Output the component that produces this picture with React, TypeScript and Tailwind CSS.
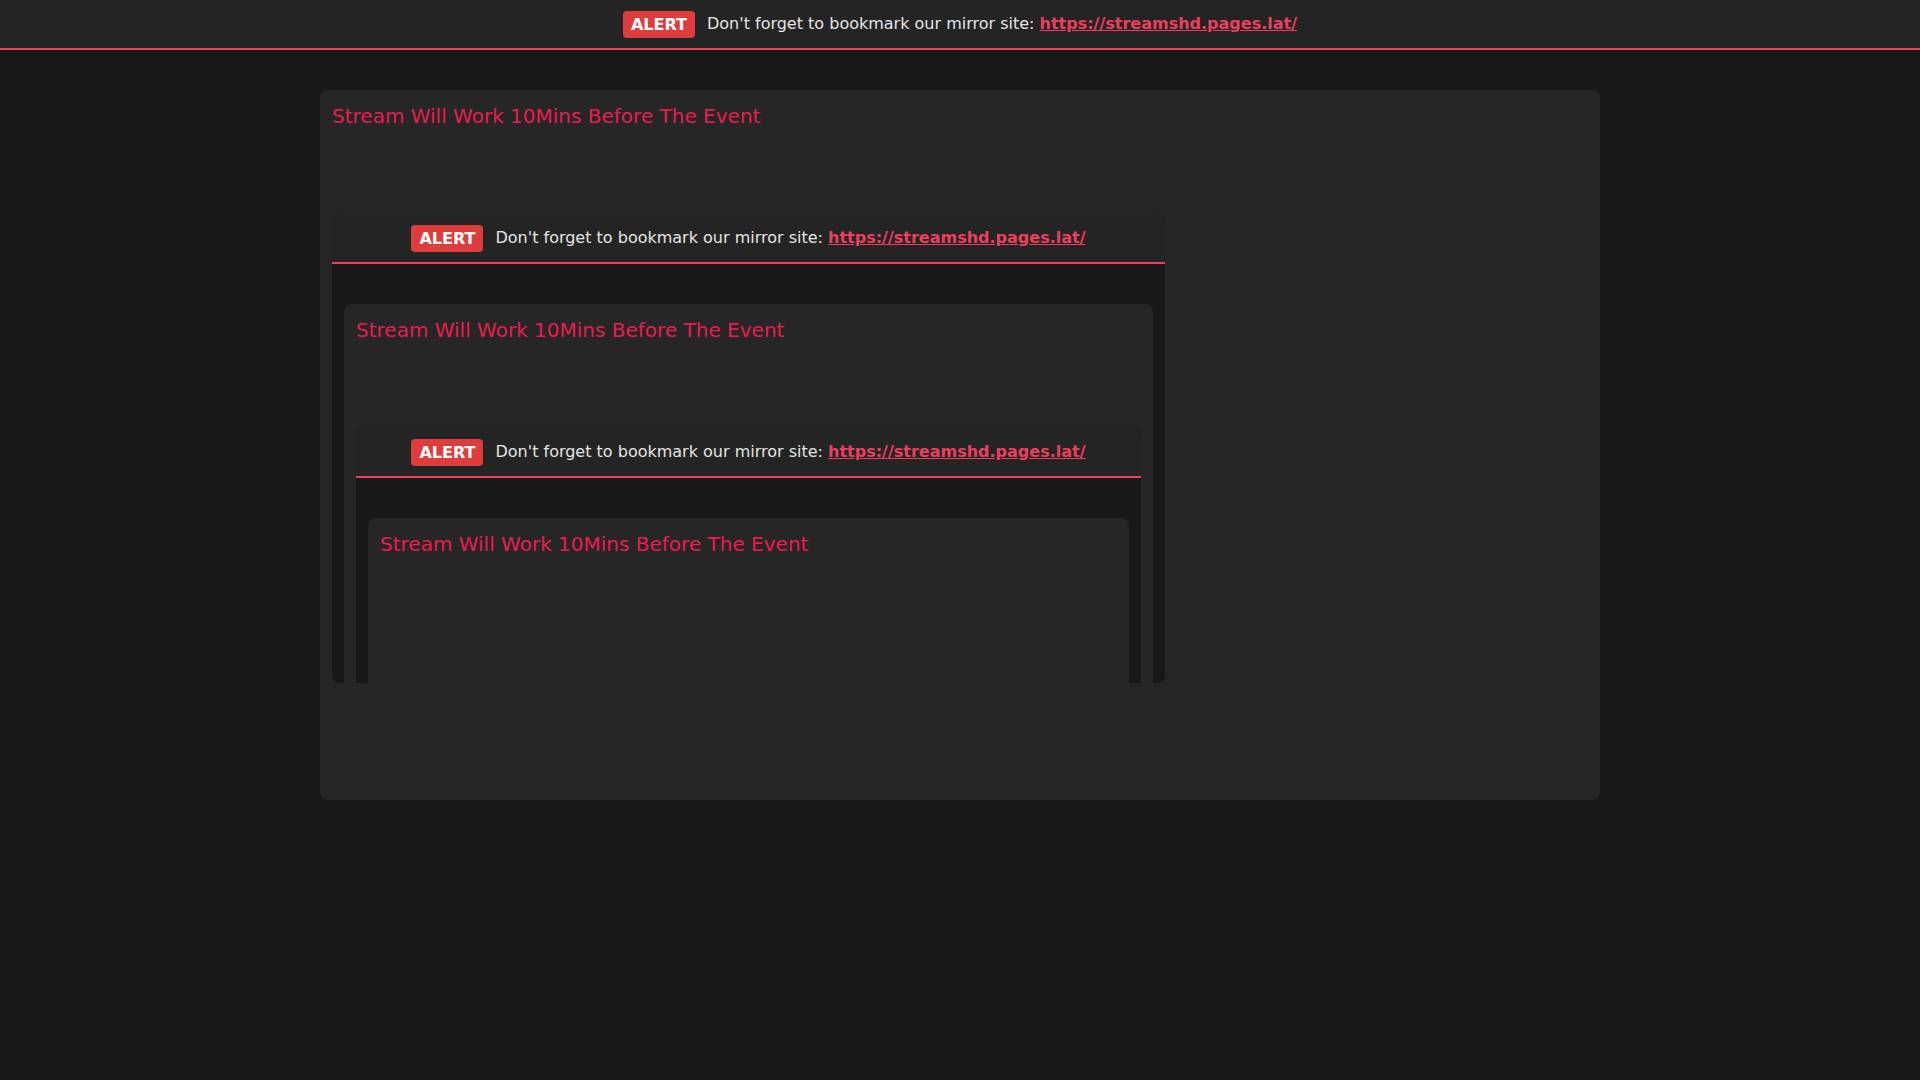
import React from "react";

const MIRROR = "https://streamshd.pages.lat/";

function AlertBar() {
  return (
    <div className="flex h-[50px] items-center justify-center border-b-2 border-[#ef3f5d] bg-[#242424]">
      <span className="rounded bg-[#df3d3d] px-2 py-1 text-base leading-[19px] font-bold text-white">
        ALERT
      </span>
      <span className="ml-3 text-base text-[#e4e4e4]">
        Don't forget to bookmark our mirror site:{" "}
        <a href={MIRROR} className="font-bold text-[#ec3f5e] underline">
          {MIRROR}
        </a>
      </span>
    </div>
  );
}

// one level of the page: top alert, then the card with the embedded player
function StreamPage({ depth, top }: { depth: number; top?: boolean }) {
  return (
    <div className="min-h-full bg-[#181818]">
      <AlertBar />
      <div className={`mx-auto mt-10 w-full max-w-[1280px] ${top ? "" : "px-3"}`}>
        <div className="rounded-lg bg-[#262626] p-3">
          <h2 className="text-xl text-[#e91d4e]">
            Stream Will Work 10Mins Before The Event
          </h2>
          {depth > 0 ? (
            <div
              className={`mt-[84px] overflow-hidden rounded-lg bg-[#181818] ${
                top ? "h-[469px] w-[833px]" : "h-[442px] w-full"
              }`}
            >
              <StreamPage depth={depth - 1} />
            </div>
          ) : (
            <div className="h-[470px]" />
          )}
          <div className="h-[105px]" />
        </div>
      </div>
    </div>
  );
}

export default function App() {
  return (
    <div className="h-screen overflow-hidden bg-[#181818] font-['DejaVu_Sans','Liberation_Sans',sans-serif]">
      <StreamPage depth={2} top />
    </div>
  );
}
